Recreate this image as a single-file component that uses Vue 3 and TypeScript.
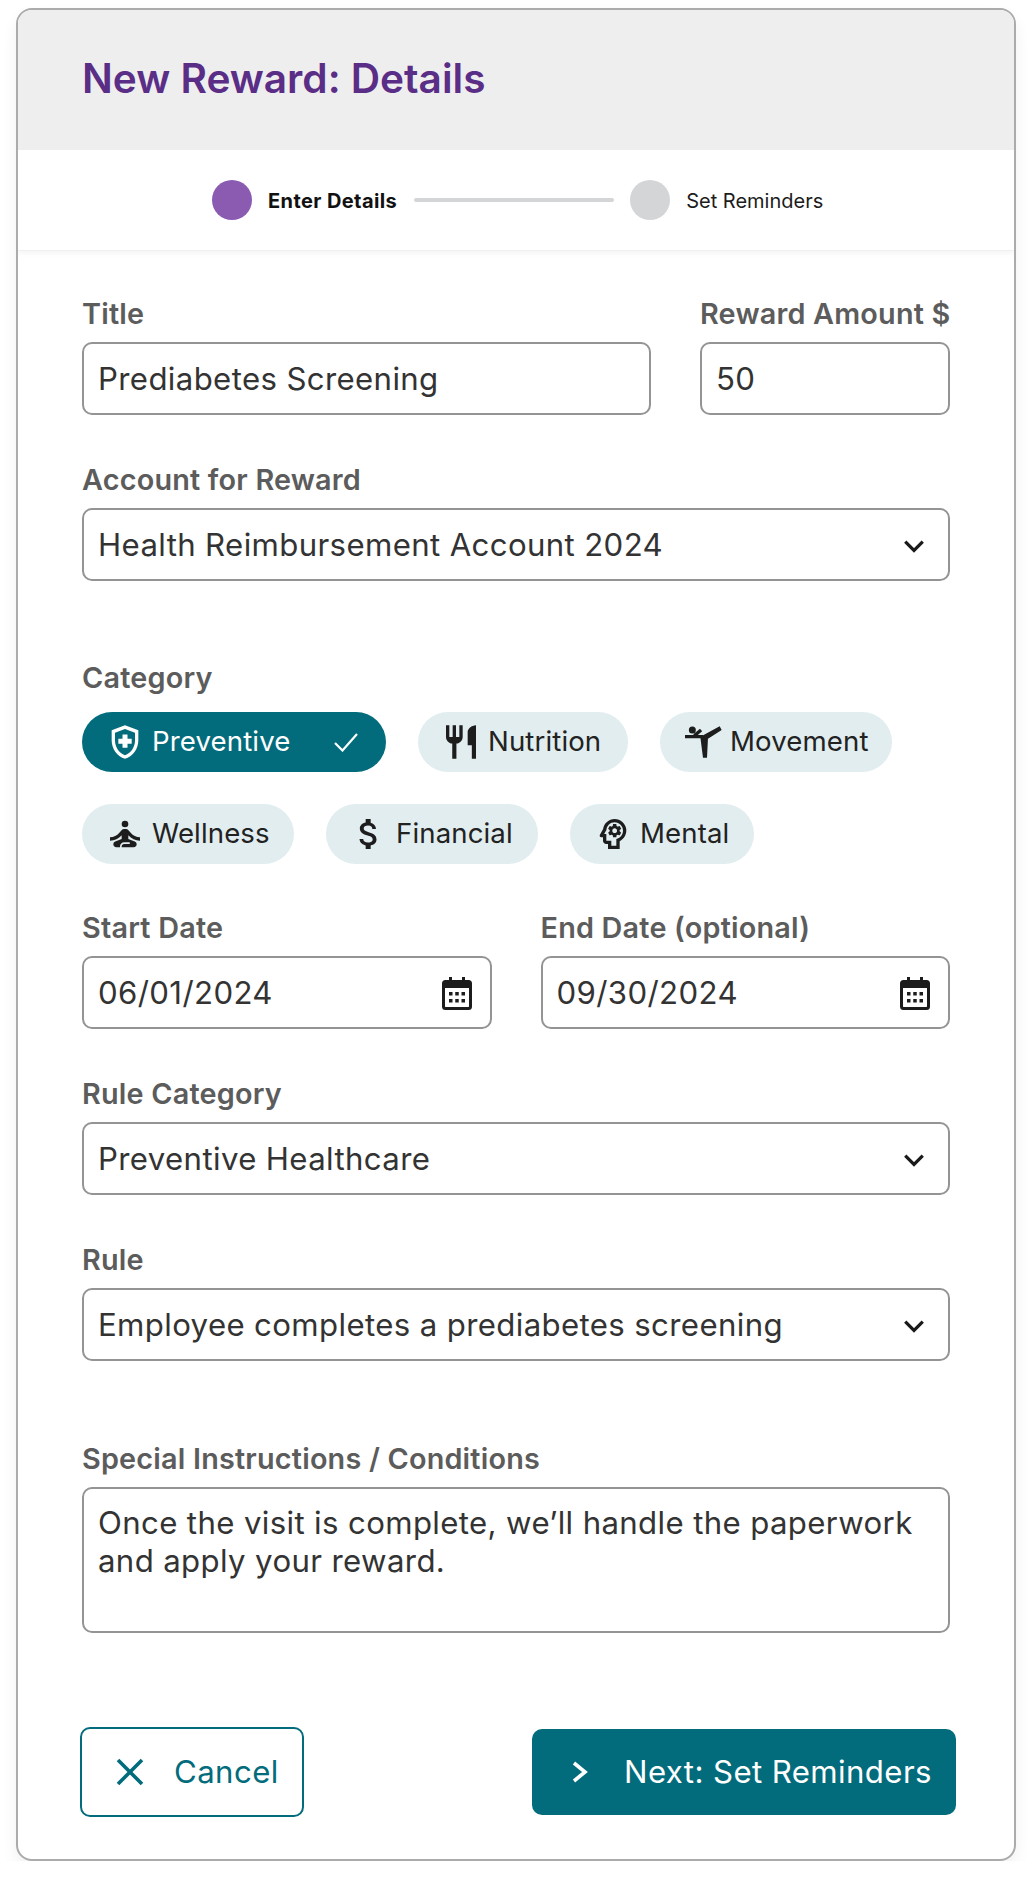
<script setup lang="ts">
interface Chip { label: string; icon: string; width: number; active?: boolean }
const shield = 'M10.5 13H8v-3h2.5V7.5h3V10H16v3h-2.5v2.5h-3V13zM12 2 4 5v6.09c0 5.05 3.41 9.76 8 10.91 4.59-1.15 8-5.86 8-10.91V5l-8-3zm6 9.09c0 4-2.55 7.7-6 8.83-3.45-1.13-6-4.82-6-8.83v-4.7l6-2.25 6 2.25v4.7z'
const fork = 'M11 9H9V2H7v7H5V2H3v7c0 2.12 1.66 3.84 3.75 3.97V22h2.5v-9.03C11.34 12.84 13 11.12 13 9V2h-2v7zm5-3v8h2.5v8H21V2c-2.76 0-5 2.24-5 4z'
const kick = 'M5.600 2.700a2.100 2.100 0 1 1 0 4.200 2.100 2.100 0 1 1 0-4.200zM1.200 7.800H12v2H1.200zM11 8.600 22 2.600 23.200 4.800 15 10 13 11.500zM6 7.500 10.200 4 11.500 5.500 8.200 8.400zM10.400 9 15 9.500 14.400 21.400H12z'
const yoga = 'M10 6a2 2 0 1 1 4 0 2 2 0 0 1-4 0zM21 16v-2c-2.24 0-4.16-.96-5.6-2.68l-1.34-1.6c-.38-.46-.94-.72-1.53-.72h-1.05c-.59 0-1.15.26-1.53.72l-1.34 1.6C7.16 13.04 5.24 14 3 14v2c2.77 0 5.19-1.17 7-3.25V15l-3.88 1.55c-.67.27-1.12.93-1.12 1.66C5 19.2 5.8 20 6.79 20H9v-.5c0-1.38 1.12-2.5 2.5-2.5h3c.28 0 .5.22.5.5s-.22.5-.5.5h-3c-.83 0-1.5.67-1.5 1.5v.5h7.21c.99 0 1.79-.8 1.79-1.79 0-.73-.45-1.39-1.12-1.66L14 15v-2.25c1.81 2.08 4.23 3.25 7 3.25z'
const dollar = 'M11.8 10.9c-2.27-.59-3-1.2-3-2.15 0-1.09 1.01-1.85 2.7-1.85 1.78 0 2.44.85 2.5 2.1h2.21c-.07-1.72-1.12-3.3-3.21-3.81V3h-3v2.16c-1.94.42-3.5 1.68-3.5 3.61 0 2.31 1.91 3.46 4.7 4.13 2.5.6 3 1.48 3 2.41 0 .69-.49 1.79-2.7 1.79-2.06 0-2.87-.92-2.98-2.1h-2.2c.12 2.19 1.76 3.42 3.68 3.83V21h3v-2.15c1.95-.37 3.5-1.5 3.5-3.55 0-2.84-2.43-3.81-4.7-4.4z'
const head = 'M15.82 7.22l-1 .4c-.21-.16-.43-.29-.67-.39L14 6.17c-.02-.1-.1-.17-.2-.17h-1.6c-.1 0-.18.07-.19.17l-.15 1.06c-.24.1-.47.23-.67.39l-1-.4c-.09-.03-.2 0-.24.09l-.8 1.38c-.05.09-.03.2.05.26l.84.66c-.02.13-.04.26-.04.39s.02.26.02.39l-.84.66c-.08.06-.1.17-.05.25l.8 1.39c.05.09.15.12.25.09l.99-.4c.21.16.43.29.68.39l.15 1.06c.01.1.1.17.2.17h1.6c.1 0 .18-.07.2-.17l.15-1.06c.24-.1.46-.23.67-.39l.99.4c.09.04.2 0 .24-.09l.8-1.39c.05-.09.03-.19-.05-.25l-.83-.66c.01-.13.02-.26.02-.39 0-.14-.01-.27-.03-.39l.85-.66c.08-.06.1-.17.05-.26l-.8-1.38c-.05-.09-.16-.12-.25-.09zM13 11.43c-.79 0-1.43-.64-1.43-1.43s.64-1.43 1.43-1.43 1.43.64 1.43 1.43-.64 1.43-1.43 1.43zM19.94 9.06C19.5 5.73 16.57 3 13 3 9.47 3 6.57 5.61 6.08 9l-1.93 3.48c-.41.66.07 1.52.85 1.52h1v2c0 1.1.9 2 2 2h1v3h7v-4.68c2.62-1.25 4.35-4.08 3.94-7.26zM14.89 14.63l-.89.43V19h-3v-3H8v-4H6.7l1.33-2.33C8.21 7.06 10.35 5 13 5c2.76 0 5 2.24 5 5 0 2.09-1.29 3.88-3.11 4.63z'

const rows: Chip[][] = [
  [
    { label: 'Preventive', icon: shield, width: 304, active: true },
    { label: 'Nutrition', icon: fork, width: 210 },
    { label: 'Movement', icon: kick, width: 232 },
  ],
  [
    { label: 'Wellness', icon: yoga, width: 212 },
    { label: 'Financial', icon: dollar, width: 212 },
    { label: 'Mental', icon: head, width: 184 },
  ],
]
const dates = [
  { label: 'Start Date', value: '06/01/2024' },
  { label: 'End Date (optional)', value: '09/30/2024' },
]
</script>

<template>
  <main class="card">
    <header class="head"><h1>New Reward: Details</h1></header>
    <nav class="stepper">
      <span class="dot dot-on"></span>
      <span class="step step-on">Enter Details</span>
      <span class="line"></span>
      <span class="dot dot-off"></span>
      <span class="step">Set Reminders</span>
    </nav>
    <form class="form" @submit.prevent>
      <div class="row row-title">
        <div class="field">
          <label>Title</label>
          <div class="box">Prediabetes Screening</div>
        </div>
        <div class="field">
          <label>Reward Amount $</label>
          <div class="box">50</div>
        </div>
      </div>

      <div class="field gap-std">
        <label>Account for Reward</label>
        <div class="box">
          <span>Health Reimbursement Account 2024</span>
          <svg class="chev" viewBox="0 0 24 24"><path d="M5 8.500 12 15.500 19 8.500" /></svg>
        </div>
      </div>

      <div class="field gap-wide">
        <label>Category</label>
        <div class="chips">
          <div v-for="(r, i) in rows" :key="i" class="chip-row">
            <div v-for="c in r" :key="c.label" class="chip" :class="{ active: c.active }" :style="{ width: c.width + 'px' }">
              <svg class="chip-ic" viewBox="0 0 24 24"><path :d="c.icon" /></svg>
              <span class="chip-text">{{ c.label }}</span>
              <svg v-if="c.active" class="tick" viewBox="0 0 24 20"><path d="M1 11 8.500 18.500 23 2" /></svg>
            </div>
          </div>
        </div>
      </div>

      <div class="row row-dates gap-date">
        <div v-for="d in dates" :key="d.label" class="field">
          <label>{{ d.label }}</label>
          <div class="box">
            <span>{{ d.value }}</span>
            <svg class="cal" viewBox="0 0 30 33">
              <path class="cal-body" fill-rule="evenodd" d="M7 0h3v3h10V0h3v3h3.500A3.500 3.500 0 0 1 30 6.500v23a3.500 3.500 0 0 1-3.500 3.500h-23A3.500 3.500 0 0 1 0 29.500v-23A3.500 3.500 0 0 1 3.500 3H7zM3 11v18.500c0 .3.200.5.500.5h23c.3 0 .5-.2.5-.5V11z" />
              <g class="cal-dots">
                <rect x="7" y="15" width="3.500" height="3.500" /><rect x="13.250" y="15" width="3.500" height="3.500" /><rect x="19.500" y="15" width="3.500" height="3.500" />
                <rect x="7" y="22" width="3.500" height="3.500" /><rect x="13.250" y="22" width="3.500" height="3.500" /><rect x="19.500" y="22" width="3.500" height="3.500" />
              </g>
            </svg>
          </div>
        </div>
      </div>

      <div class="field gap-std">
        <label>Rule Category</label>
        <div class="box">
          <span>Preventive Healthcare</span>
          <svg class="chev" viewBox="0 0 24 24"><path d="M5 8.500 12 15.500 19 8.500" /></svg>
        </div>
      </div>

      <div class="field gap-std">
        <label>Rule</label>
        <div class="box">
          <span>Employee completes a prediabetes screening</span>
          <svg class="chev" viewBox="0 0 24 24"><path d="M5 8.500 12 15.500 19 8.500" /></svg>
        </div>
      </div>

      <div class="field gap-special">
        <label>Special Instructions / Conditions</label>
        <div class="box area">Once the visit is complete, we’ll handle the paperwork and apply your reward.</div>
      </div>

      <footer class="foot">
        <button type="button" class="btn cancel">
          <svg viewBox="0 0 30 30"><path d="M3 3 27 27M27 3 3 27" /></svg>
          <span>Cancel</span>
        </button>
        <button type="button" class="btn next">
          <svg viewBox="0 0 30 30"><path d="M8 6 19 15 8 24" /></svg>
          <span>Next: Set Reminders</span>
        </button>
      </footer>
    </form>
  </main>
</template>

<style>
html, body { margin: 0; background: #fff; }
</style>

<style scoped>
.card {
  box-sizing: border-box;
  width: 1000px;
  height: 1853px;
  margin: 8px 0 0 16px;
  border: 2px solid #ababab;
  border-radius: 16px;
  background: #fff;
  overflow: hidden;
  box-shadow: 0 8px 16px rgba(0, 0, 0, 0.06);
  font-family: Inter, "Liberation Sans", sans-serif;
  color: #2f2f2f;
}
.head {
  height: 140px;
  background: #eeeeef;
  display: flex;
  align-items: center;
  padding-left: 64px;
}
.head h1 {
  margin: 0 0 2px;
  font-size: 40.6px;
  line-height: 48px;
  font-weight: 600;
  color: #5a2d86;
}
.stepper {
  height: 100px;
  display: flex;
  align-items: center;
  padding-left: 194px;
  border-bottom: 1px solid #f0f0f0;
  box-shadow: 0 3px 5px rgba(0, 0, 0, 0.04);
}
.dot { width: 40px; height: 40px; border-radius: 50%; flex: none; }
.dot-on { background: #8a5bb1; }
.dot-off { background: #d3d5d6; }
.step { margin: 2px 0 0 16px; font-size: 20px; line-height: 24px; color: #1c1c1c; }
.step-on { font-weight: 700; letter-spacing: 0.4px; color: #111; }
.line { width: 200px; height: 4px; background: #d3d5d6; margin: 0 16px 0 17px; border-radius: 2px; }
.form { padding: 46px 64px 0; }
.row { display: grid; }
.row-title { grid-template-columns: 1fr 250px; gap: 49px; }
.row-dates { grid-template-columns: 1fr 1fr; gap: 49px; }
.field { display: flex; flex-direction: column; }
label {
  font-size: 28.8px;
  line-height: 34px;
  font-weight: 600;
  letter-spacing: 0.2px;
  color: #5c5c5c;
  margin-bottom: 11px;
  white-space: nowrap;
}
.box {
  box-sizing: border-box;
  height: 73px;
  border: 2px solid #949494;
  border-radius: 10px;
  display: flex;
  align-items: center;
  justify-content: space-between;
  padding: 0 18px 0 14px;
  font-size: 31.2px;
  letter-spacing: 0.36px;
  color: #333;
  white-space: nowrap;
}
.area {
  height: 146px;
  display: block;
  padding: 15px 14px;
  line-height: 38.4px;
  white-space: normal;
}
.gap-std { margin-top: 48px; }
.gap-wide { margin-top: 80px; }
.gap-date { margin-top: 47px; }
.gap-special { margin-top: 81px; }
.chev { width: 30px; height: 30px; margin: 3px 1px 0 0; fill: none; stroke: #1a1a1a; stroke-width: 2.6; }
.cal { width: 30px; height: 33px; margin-top: 2px; }
.cal-body, .cal-dots { fill: #1c1c1c; }
.chips { display: flex; flex-direction: column; gap: 32px; margin-top: 6px; }
.chip-row { display: flex; gap: 32px; }
.chip {
  height: 60px;
  box-sizing: border-box;
  border-radius: 30px;
  background: #e1edef;
  display: flex;
  align-items: center;
  padding: 0 24px 0 23px;
  font-size: 27.6px;
  letter-spacing: 0.12px;
  color: #222;
  white-space: nowrap;
}
.chip-text { margin-bottom: 2px; }
.chip-ic { width: 40px; height: 40px; fill: #1d1d1d; margin-right: 7px; flex: none; }
.chip.active { background: #026c7c; color: #fff; padding-right: 28px; }
.chip.active .chip-ic { fill: #fff; }
.tick { width: 24px; height: 20px; fill: none; stroke: #fff; stroke-width: 2.2; margin-left: auto; }
.foot {
  display: flex;
  justify-content: space-between;
  align-items: center;
  margin: 94px -6px 0 -2px;
}
.btn {
  box-sizing: border-box;
  display: flex;
  align-items: center;
  border-radius: 10px;
  font: inherit;
  font-size: 31.2px;
  letter-spacing: 0.4px;
  padding: 0;
  cursor: pointer;
}
.cancel {
  width: 224px;
  height: 90px;
  background: #fff;
  border: 2px solid #026c7c;
  color: #026c7c;
  padding-left: 33px;
}
.cancel svg { width: 30px; height: 30px; fill: none; stroke: #026c7c; stroke-width: 3.6; margin-right: 29px; }
.next {
  width: 424px;
  height: 86px;
  background: #026c7c;
  border: 0;
  color: #fff;
  padding-left: 34px;
}
.next svg { width: 30px; height: 30px; fill: none; stroke: #fff; stroke-width: 3.6; margin-right: 28px; }
</style>
